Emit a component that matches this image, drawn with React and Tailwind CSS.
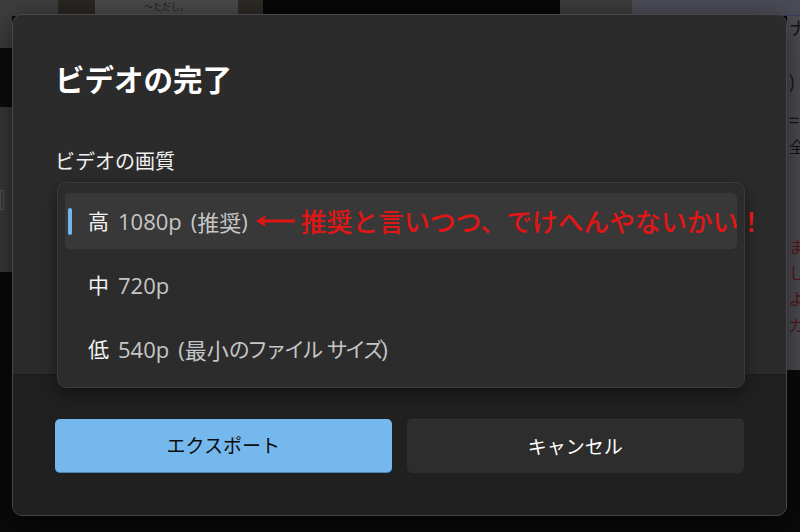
import React from "react";

const LAT = { fontFamily: '"Open Sans", "Noto Sans CJK JP", sans-serif' };
const JP = { fontFamily: '"Noto Sans CJK JP", "Open Sans", sans-serif' };

function Backdrop() {
  return (
    <div className="absolute inset-0 bg-[#0a0a0a] flex flex-col">
      <div className="h-[16px] flex shrink-0">
        <div className="w-[58px] bg-[#3e3e3e]" />
        <div className="w-[37px] bg-[#2a2622]" />
        <div className="w-[143px] bg-[#4a4a4a] flex justify-center">
          <span className="text-[9px] text-[#1e1e1e] leading-[14px]" style={JP}>〜ただし。</span>
        </div>
        <div className="w-[25px] bg-[#2e2a26]" />
        <div className="w-[297px] bg-[#070707]" />
        <div className="w-[72px] bg-[#3c3c3c]" />
        <div className="flex-1 bg-[#4c4c58] border-b border-[#3a3a6a]" />
      </div>
      <div className="flex-1 flex justify-between">
        <div className="w-[12px] flex flex-col">
          <div className="h-[32px] bg-[#3e3e3e]" />
          <div className="h-[59px] bg-[#0c0c0c]" />
          <div className="h-[165px] bg-[#3a3a3a] pt-[83px]">
            <div className="w-[4px] h-[20px] border border-[#555]" />
          </div>
        </div>
        <div className="w-[13px] h-[354px] bg-[#4e4e56] flex flex-col items-start pl-[2px] pt-[2px] overflow-hidden leading-none" style={JP}>
          <span className="text-[18px] text-[#151515]">ナ</span>
          <span className="mt-[36px] text-[18px] text-[#151515]">)</span>
          <span className="mt-[20px] text-[18px] text-[#151515]">=</span>
          <span className="mt-[10px] text-[16px] text-[#151515]">全</span>
          <span className="mt-[84px] text-[16px] text-[#5a1818]">ま</span>
          <span className="mt-[10px] text-[16px] text-[#5a1818]">し</span>
          <span className="mt-[10px] text-[16px] text-[#5a1818]">よ</span>
          <span className="mt-[10px] text-[16px] text-[#5a1818]">ガ</span>
        </div>
      </div>
    </div>
  );
}

// kinds: "l" latin, "k" kanji, "n" narrow kana, "g" gap
function Rest({ parts }) {
  return (
    <span className="ml-[9px] text-[#c6c6c6] flex items-center">
      {parts.map(([t, kind], i) => {
        if (kind === "k") return <span key={i} className="text-[22px]" style={JP}>{t}</span>;
        if (kind === "n") return <span key={i} className="text-[21px] tracking-[-2.6px]" style={JP}>{t}</span>;
        if (kind === "g") return <span key={i} className="w-[9px]" />;
        if (kind === "s") return <span key={i} className="w-[6px]" />;
        return <span key={i} className="text-[22px] whitespace-pre" style={LAT}>{t}</span>;
      })}
    </span>
  );
}

function Row({ head, parts, selected, children }) {
  return (
    <div className={`relative h-[56px] flex items-center pl-[23px] rounded-[5px] whitespace-nowrap ${selected ? "bg-[#383838]" : ""}`}>
      {selected && <div className="absolute left-[3px] top-[15px] w-[4px] h-[27px] rounded-full bg-[#72b6ec]" />}
      <span className="text-[21px] text-[#f2f2f2]" style={JP}>{head}</span>
      <Rest parts={parts} />
      {children}
    </div>
  );
}

export default function App() {
  return (
    <div className="relative w-[800px] h-[532px] overflow-hidden" style={LAT}>
      <Backdrop />
      <div className="absolute left-[12px] top-[14px] w-[775px] h-[502px] rounded-[10px] border border-[#474747] bg-[#2b2b2b] overflow-hidden flex flex-col shadow-[0_8px_30px_rgba(0,0,0,0.6)]">
        <div className="relative h-[359px] px-[42px] pt-[43px]">
          <h1 className="text-[29.5px] font-bold text-white leading-[40px]" style={JP}>ビデオの完了</h1>
          <div className="mt-[49px] text-[20px] text-[#f0f0f0] leading-[28px]" style={JP}>ビデオの画質</div>
        </div>
        <div className="flex-1 bg-[#202020] border-t border-[#1c1c1c] flex gap-[15px] px-[42px] pt-[44px]">
          <button className="w-[337px] h-[54px] rounded-[5px] bg-[#75b8ee] border-b border-[#4b86b8] text-[19px] text-[#0c0c0c]" style={JP}>エクスポート</button>
          <button className="w-[338px] h-[54px] rounded-[5px] bg-[#2d2d2d] border-t border-[#353535] text-[19px] text-white" style={JP}>キャンセル</button>
        </div>
        {/* dropdown popup */}
        <div className="absolute left-[44px] top-[167px] w-[688px] h-[206px] rounded-[9px] border border-[#3a3a3a] bg-[#2c2c2c] shadow-[0_6px_16px_rgba(0,0,0,0.45)] px-[7px] pt-[10px] flex flex-col gap-[8px]">
          <Row head="高" parts={[["1080p", "l"], ["", "g"], ["(", "l"], ["推奨", "k"], [")", "l"]]} selected>
            <svg width="42" height="14" viewBox="0 0 42 14" className="ml-[7px] shrink-0">
              <line x1="6" y1="7" x2="40" y2="7" stroke="#e11414" strokeWidth="3" />
              <path d="M1 7 L11 1 L9 7 L11 13 Z" fill="#e11414" />
            </svg>
            <span className="ml-[4px] text-[25.8px] font-medium text-[#e31515] leading-none" style={JP}>推奨と言いつつ、でけへんやないかい！</span>
          </Row>
          <Row head="中" parts={[["720p", "l"]]} />
          <Row head="低" parts={[["540p", "l"], ["", "g"], ["(", "l"], ["最小", "k"], ["のファイル", "n"], ["", "s"], ["サイズ", "n"], [")", "l"]]} />
        </div>
      </div>
    </div>
  );
}
